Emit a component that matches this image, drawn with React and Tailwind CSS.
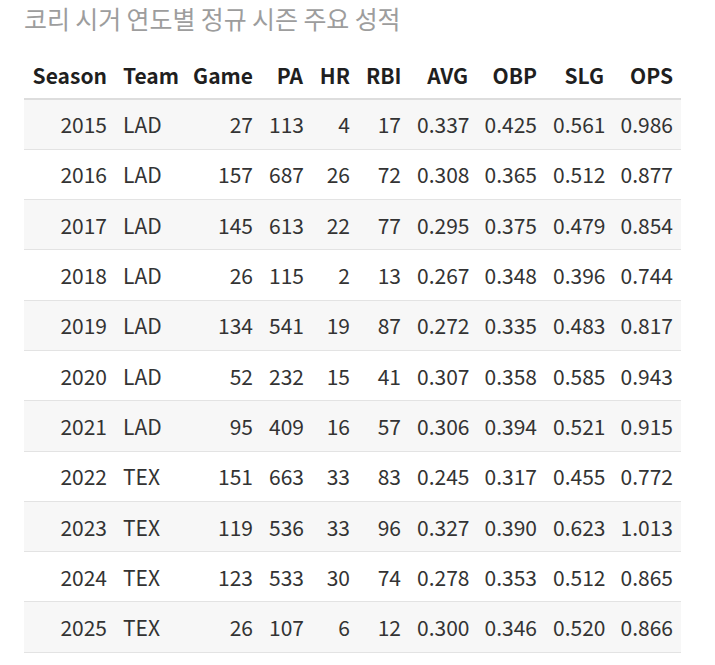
import React from 'react';

const rows = [
  ['2015', 'LAD', 27, 113, 4, 17, '0.337', '0.425', '0.561', '0.986'],
  ['2016', 'LAD', 157, 687, 26, 72, '0.308', '0.365', '0.512', '0.877'],
  ['2017', 'LAD', 145, 613, 22, 77, '0.295', '0.375', '0.479', '0.854'],
  ['2018', 'LAD', 26, 115, 2, 13, '0.267', '0.348', '0.396', '0.744'],
  ['2019', 'LAD', 134, 541, 19, 87, '0.272', '0.335', '0.483', '0.817'],
  ['2020', 'LAD', 52, 232, 15, 41, '0.307', '0.358', '0.585', '0.943'],
  ['2021', 'LAD', 95, 409, 16, 57, '0.306', '0.394', '0.521', '0.915'],
  ['2022', 'TEX', 151, 663, 33, 83, '0.245', '0.317', '0.455', '0.772'],
  ['2023', 'TEX', 119, 536, 33, 96, '0.327', '0.390', '0.623', '1.013'],
  ['2024', 'TEX', 123, 533, 30, 74, '0.278', '0.353', '0.512', '0.865'],
  ['2025', 'TEX', 26, 107, 6, 12, '0.300', '0.346', '0.520', '0.866'],
];

// 열 너비 (px) — 스크린샷 기준
const cols = [
  { name: 'Season', w: 'w-[91px]', align: 'text-right' },
  { name: 'Team', w: 'w-[70px]', align: 'text-left' },
  { name: 'Game', w: 'w-[76px]', align: 'text-right' },
  { name: 'PA', w: 'w-[50px]', align: 'text-right' },
  { name: 'HR', w: 'w-[47px]', align: 'text-right' },
  { name: 'RBI', w: 'w-[51px]', align: 'text-right' },
  { name: 'AVG', w: 'w-[67px]', align: 'text-right' },
  { name: 'OBP', w: 'w-[69px]', align: 'text-right' },
  { name: 'SLG', w: 'w-[67px]', align: 'text-right' },
  { name: 'OPS', w: 'w-[69px]', align: 'text-right' },
];

const App = () => {
  return (
    <div className="min-h-screen bg-white pl-6 pt-[2px] font-['Noto_Sans_CJK_KR','Noto_Sans',sans-serif]">
      <h2 className="text-[25px] leading-[33px] text-[#9d9d9d] tracking-[-0.1px]">코리 시거 연도별 정규 시즌 주요 성적</h2>

      <table className="mt-[25px] w-[657px] table-fixed border-collapse text-[21px] leading-[30px]">
        <thead>
          <tr className="border-b-2 border-[#dddddd]">
            {cols.map((c) => (
              <th key={c.name} className={`${c.w} ${c.align} px-2 pb-[8px] pt-0 h-[38px] font-bold text-[#1f1f1f]`}>
                {c.name}
              </th>
            ))}
          </tr>
        </thead>
        <tbody>
          {rows.map((r, i) => (
            <tr key={r[0]} className={`border-b border-[#e3e3e3] ${i % 2 === 0 ? 'bg-[#f7f7f7]' : 'bg-white'}`}>
              {r.map((v, j) => (
                <td key={j} className={`${cols[j].align} px-2 h-[50.3px] text-[#333]`}>
                  {v}
                </td>
              ))}
            </tr>
          ))}
        </tbody>
      </table>
    </div>
  );
};

export default App;
